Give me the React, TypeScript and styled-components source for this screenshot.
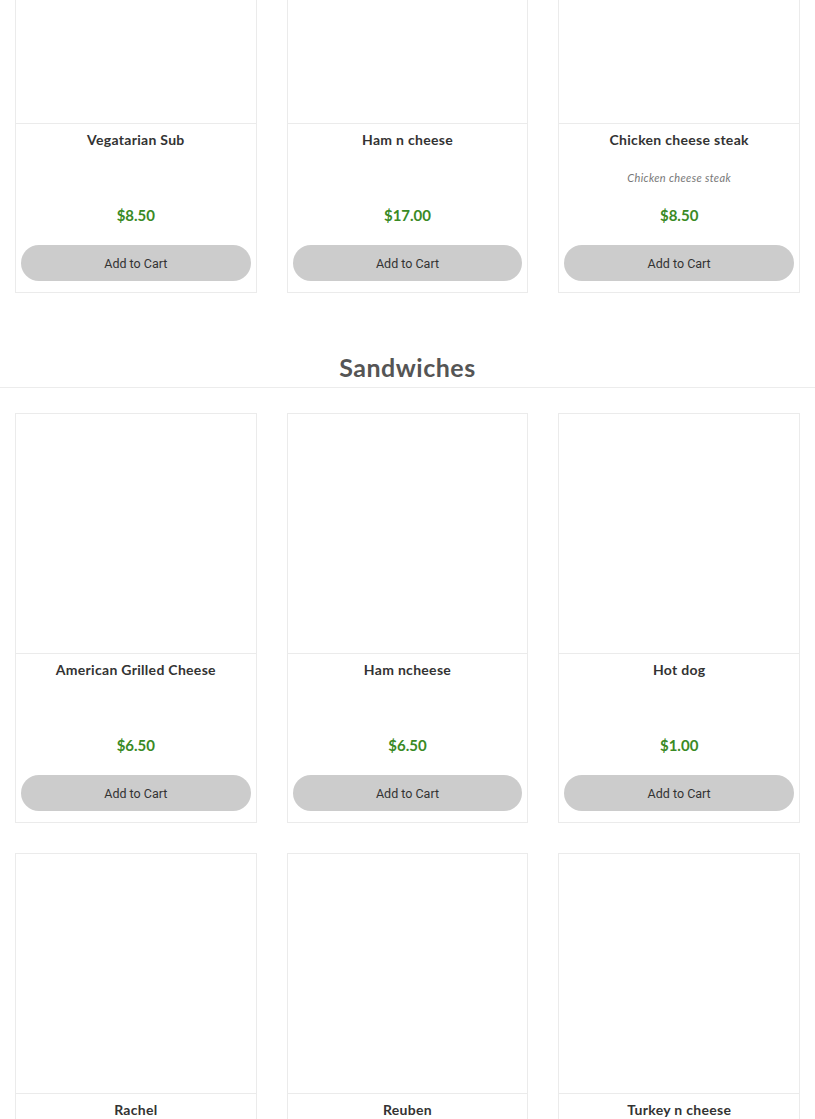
import React from "react";
import styled, { createGlobalStyle } from "styled-components";

const GlobalStyle = createGlobalStyle`
  html, body { margin: 0; padding: 0; background: #fff; }
  body { font-family: Lato, "Liberation Sans", sans-serif; color: #333; overflow-x: hidden; }
  * { box-sizing: border-box; }
`;

type Item = { name: string; price: string; desc?: string };

const subs: Item[] = [
  { name: "Vegatarian Sub", price: "$8.50" },
  { name: "Ham n cheese", price: "$17.00" },
  { name: "Chicken cheese steak", price: "$8.50", desc: "Chicken cheese steak" },
];

const sandwiches: Item[] = [
  { name: "American Grilled Cheese", price: "$6.50" },
  { name: "Ham ncheese", price: "$6.50" },
  { name: "Hot dog", price: "$1.00" },
  { name: "Rachel", price: "$6.50" },
  { name: "Reuben", price: "$6.50" },
  { name: "Turkey n cheese", price: "$6.50" },
];

const Page = styled.main`
  margin-top: -117px;
`;

const Section = styled.section<{ $first?: boolean }>`
  margin-top: ${(p) => (p.$first ? "0" : "60px")};
`;

const Heading = styled.h2`
  margin: 0 0 25px;
  padding-bottom: 6px;
  border-bottom: 1px solid #ececec;
  text-align: center;
  font-family: Lato, "Liberation Sans", sans-serif;
  font-weight: 700;
  font-size: 25px;
  letter-spacing: 0.5px;
  line-height: 28px;
  color: #555;
`;

const Grid = styled.div`
  display: grid;
  grid-template-columns: repeat(3, 1fr);
  column-gap: 30px;
  row-gap: 30px;
  padding: 0 15px;
`;

const Card = styled.article`
  border: 1px solid #ebebeb;
  background: #fff;
  display: flex;
  flex-direction: column;
`;

const Photo = styled.div`
  height: 240px;
  border-bottom: 1px solid #ebebeb;
  background: #fff;
`;

const Body = styled.div`
  padding: 6px 5px 11px;
  display: flex;
  flex-direction: column;
  align-items: stretch;
  text-align: center;
`;

const Title = styled.h3`
  margin: 0;
  font-family: Lato, "Liberation Sans", sans-serif;
  font-weight: 700;
  font-size: 14px;
  letter-spacing: 0.3px;
  line-height: 20px;
  color: #333;
`;

const DescArea = styled.div`
  height: 55px;
  display: flex;
  align-items: center;
  justify-content: center;
`;

const Desc = styled.p`
  margin: 0;
  font-family: Lato, "Liberation Sans", sans-serif;
  font-style: italic;
  font-size: 11px;
  letter-spacing: 0.35px;
  line-height: 16px;
  color: #777;
`;

const Price = styled.div`
  font-family: Lato, "Liberation Sans", sans-serif;
  font-weight: 700;
  font-size: 15px;
  line-height: 20px;
  color: #3a8a25;
`;

const Button = styled.button`
  margin-top: 20px;
  height: 36px;
  border: none;
  border-radius: 18px;
  background: #cccccc;
  color: #333;
  font-family: Roboto, "Liberation Sans", sans-serif;
  font-size: 12.5px;
  cursor: pointer;
`;

function ProductCard({ item }: { item: Item }) {
  return (
    <Card>
      <Photo />
      <Body>
        <Title>{item.name}</Title>
        <DescArea>{item.desc && <Desc>{item.desc}</Desc>}</DescArea>
        <Price>{item.price}</Price>
        <Button>Add to Cart</Button>
      </Body>
    </Card>
  );
}

export default function App() {
  return (
    <>
      <GlobalStyle />
      <Page>
        <Section $first>
          <Grid>
            {subs.map((it) => (
              <ProductCard key={it.name} item={it} />
            ))}
          </Grid>
        </Section>
        <Section>
          <Heading>Sandwiches</Heading>
          <Grid>
            {sandwiches.map((it) => (
              <ProductCard key={it.name} item={it} />
            ))}
          </Grid>
        </Section>
      </Page>
    </>
  );
}
